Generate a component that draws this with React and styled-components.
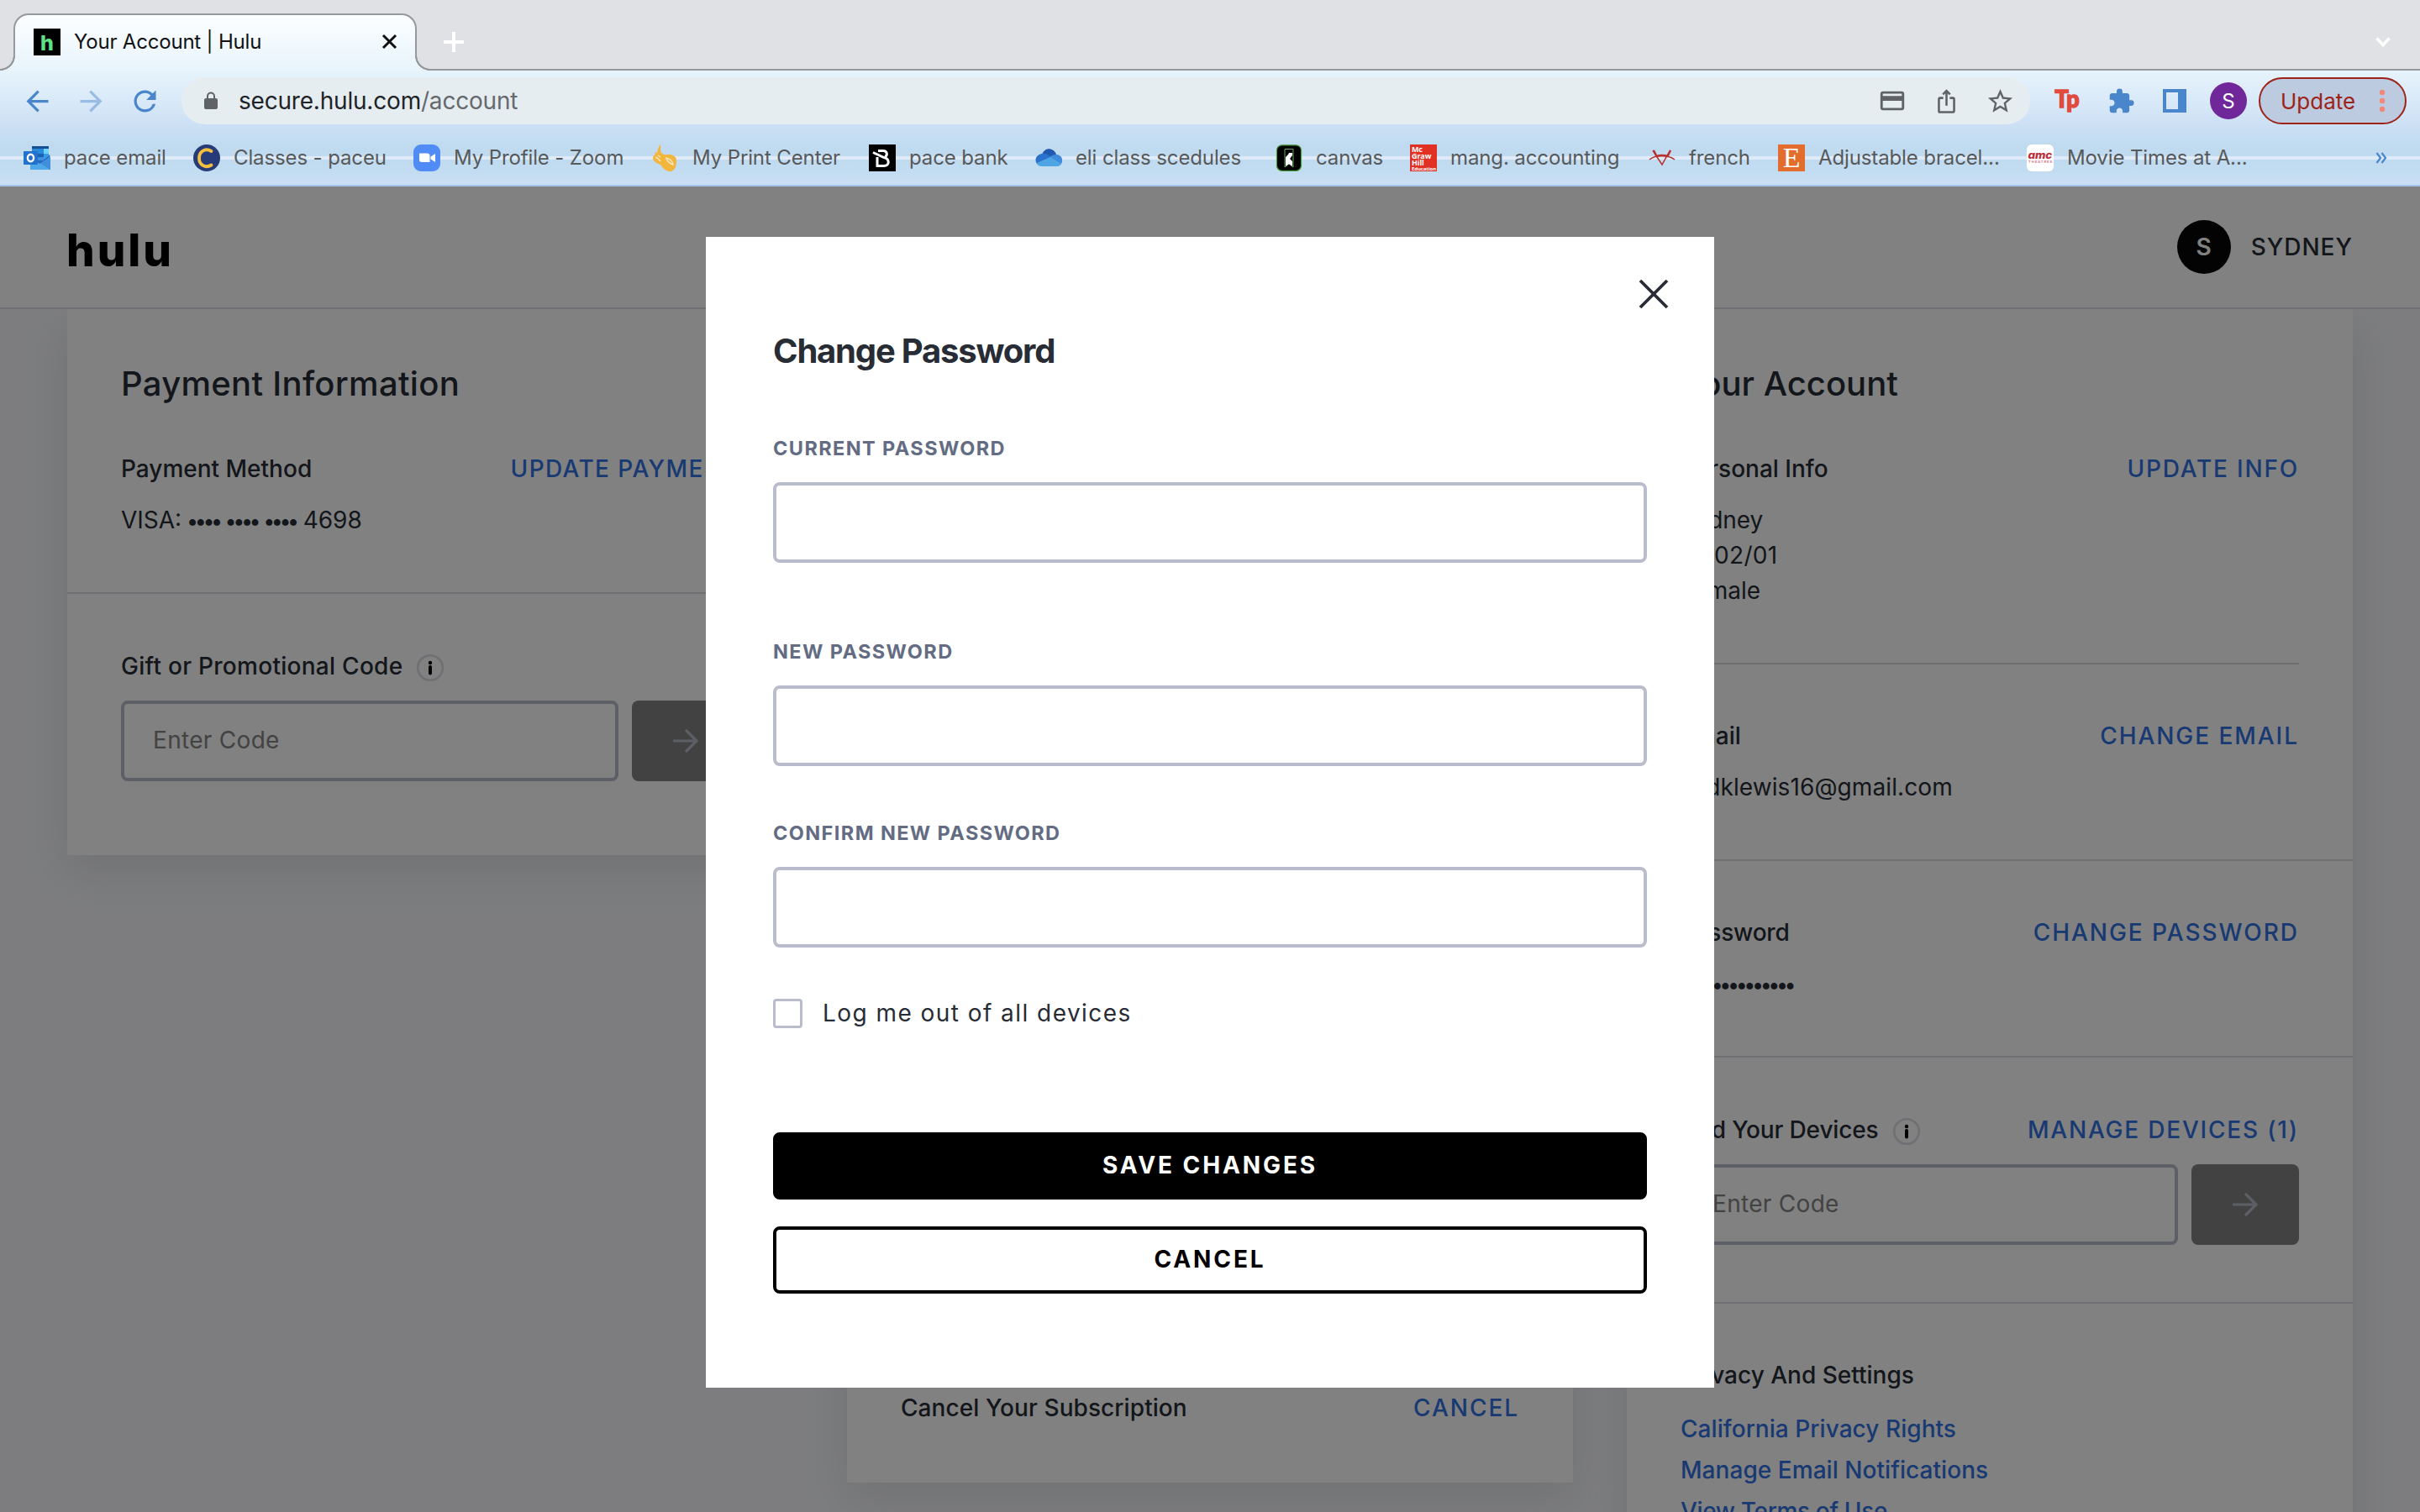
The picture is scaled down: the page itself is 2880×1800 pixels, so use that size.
import React from 'react'
import styled, { createGlobalStyle } from 'styled-components'
import {
  MdArrowBack,
  MdArrowForward,
  MdRefresh,
  MdCreditCard,
  MdIosShare,
  MdStarBorder,
  MdExtension,
} from 'react-icons/md'

const GlobalStyle = createGlobalStyle`
  * {
    box-sizing: border-box;
  }
  body {
    margin: 0;
    overflow: hidden;
    font-family: Inter, 'Liberation Sans', sans-serif;
  }
`

const Window = styled.div`
  width: 2880px;
  height: 1800px;
  display: flex;
  flex-direction: column;
  overflow: hidden;
`

/* ---------- browser ---------- */

const TabStrip = styled.div`
  height: 84px;
  flex: none;
  display: flex;
  align-items: flex-start;
  padding: 16px 35px 0 16px;
  background: #dfe1e5;
  border-bottom: 2px solid #96989c;
`

const Tab = styled.div`
  position: relative;
  width: 480px;
  height: 68px;
  display: flex;
  align-items: center;
  padding: 0 21px 3px 22px;
  border: 2px solid #96989c;
  border-bottom: 0;
  border-radius: 18px 18px 0 0;
  background: linear-gradient(#fcfeff, #e8f4fc);
  &::before,
  &::after {
    content: '';
    position: absolute;
    bottom: 0;
    width: 18px;
    height: 18px;
  }
  &::before {
    left: -18px;
    background: radial-gradient(circle at 0 0, #dfe1e5 15.5px, #96989c 16px 17.7px, #e9f4fc 18.3px);
  }
  &::after {
    right: -18px;
    background: radial-gradient(circle at 100% 0, #dfe1e5 15.5px, #96989c 16px 17.7px, #e9f4fc 18.3px);
  }
`

const TabTitle = styled.span`
  flex: 1;
  margin-left: 16px;
  font-size: 24px;
  letter-spacing: -0.2px;
  color: #111;
`

const StripIcons = styled.div`
  flex: 1;
  height: 67px;
  display: flex;
  align-items: center;
  justify-content: space-between;
  padding-left: 31px;
`

const BrowserBars = styled.div`
  height: 138px;
  flex: none;
  border-bottom: 2px solid #a3c3e8;
  background: linear-gradient(
    #e6f3fc 0,
    #dcebf9 30px,
    #cbdff4 68px,
    #c0dbf0 88px,
    #c0dbf0 102px,
    #dfebf8 102px,
    #dfebf8 106px,
    #c0dbf0 106px,
    #c2dcf1 120px,
    #cbdff4 136px
  );
`

const Toolbar = styled.div`
  height: 72px;
  display: flex;
  align-items: center;
  padding: 0 16px 0 24px;
`

const IconGroup = styled.div`
  display: flex;
  align-items: center;
  gap: 24px;
  color: ${(p) => p.$color};
`

const IconBox = styled.span`
  width: 40px;
  height: 40px;
  display: flex;
  align-items: center;
  justify-content: center;
  opacity: ${(p) => (p.$dim ? 0.45 : 1)};
`

const Omnibox = styled.div`
  width: 2200px;
  height: 56px;
  margin: 0 24px;
  padding: 0 16px 0 26px;
  display: flex;
  align-items: center;
  border-radius: 28px;
  background: #e6edf1;
`

const Url = styled.span`
  flex: 1;
  margin-left: 24px;
  font-size: 28px;
  letter-spacing: -0.2px;
  color: #202327;
`

const UrlPath = styled.span`
  color: #65696e;
`

const ProfileBadge = styled.span`
  width: 44px;
  height: 44px;
  margin: 0 14px 0 22px;
  display: flex;
  align-items: center;
  justify-content: center;
  border-radius: 50%;
  background: #70279a;
  color: #fff;
  font-size: 24px;
`

const UpdateButton = styled.span`
  width: 176px;
  height: 56px;
  padding: 0 23px 0 24px;
  display: flex;
  align-items: center;
  justify-content: space-between;
  border: 2.5px solid #9c2318;
  border-radius: 28px;
  background: #bccbe0;
  color: #9c2318;
  font-size: 26px;
`

const Bookmarks = styled.div`
  height: 64px;
  display: flex;
  align-items: center;
  padding: 0 39px 0 28px;
`

const Bookmark = styled.div`
  width: ${(p) => p.$width}px;
  flex: none;
  display: flex;
  align-items: center;
  gap: 16px;
  white-space: nowrap;
  color: #57595b;
  font-size: 24px;
  letter-spacing: -0.12px;
  svg {
    flex: none;
  }
  span {
    padding-bottom: 2px;
  }
`

const More = styled.span`
  margin-left: auto;
  display: flex;
`

/* ---------- account page ---------- */

const Page = styled.div`
  position: relative;
  flex: 1;
  min-height: 0;
  display: flex;
  flex-direction: column;
  background: #f7f8fb;
  color: #272c35;
`

const Header = styled.header`
  height: 146px;
  flex: none;
  display: flex;
  align-items: center;
  justify-content: space-between;
  padding: 0 80px 1px 79px;
  border-bottom: 2px solid #dcdde6;
  background: #fff;
`

const Logo = styled.span`
  font-size: 53px;
  line-height: 64px;
  font-weight: 800;
  letter-spacing: 3px;
  color: #000;
  padding-top: 8px;
`

const User = styled.div`
  display: flex;
  align-items: center;
  gap: 24px;
  font-size: 28px;
  font-weight: 500;
  letter-spacing: 1px;
`

const UserInitial = styled.span`
  width: 64px;
  height: 64px;
  display: flex;
  align-items: center;
  justify-content: center;
  border-radius: 50%;
  background: #040605;
  color: #fff;
  font-weight: 600;
  letter-spacing: 0;
`

const Columns = styled.main`
  flex: 1;
  min-height: 0;
  display: grid;
  grid-template-columns: repeat(3, 864px);
  gap: 64px;
  align-items: start;
  padding: 0 80px;
  overflow: hidden;
`

const Card = styled.section`
  min-height: ${(p) => p.$height}px;
  display: flex;
  flex-direction: column;
  justify-content: ${(p) => (p.$end ? 'flex-end' : 'flex-start')};
  background: #fff;
  box-shadow: 0 20px 50px rgba(30, 30, 50, 0.1);
`

const Section = styled.div`
  padding: ${(p) => p.$top || 64}px 64px ${(p) => p.$bottom || 65}px;
  border-bottom: ${(p) => (p.$last ? 0 : 2)}px solid #dcdde3;
`

const InsetRule = styled.hr`
  flex: none;
  width: 736px;
  height: 2px;
  margin: 0 64px;
  border: 0;
  background: #dcdce0;
`

const CardTitle = styled.h2`
  margin: 0 0 52px;
  font-size: 40px;
  line-height: 56px;
  font-weight: 500;
  letter-spacing: ${(p) => p.$ls || 0}px;
`

const Row = styled.div`
  height: 42px;
  display: flex;
  justify-content: space-between;
  font-size: 28px;
  line-height: 42px;
  font-weight: 500;
  white-space: nowrap;
`

const RowLabel = styled.span`
  display: flex;
  align-items: center;
  letter-spacing: ${(p) => p.$ls || 0}px;
  svg {
    margin: 4px 0 0 16px;
  }
`

const RowLink = styled.a`
  color: #3271e3;
  letter-spacing: ${(p) => p.$ls || 1.95}px;
`

const Values = styled.div`
  margin-top: 19px;
  font-size: 28px;
  line-height: 42px;
`

const Value = styled.div`
  letter-spacing: ${(p) => p.$ls || 0}px;
`

const Dots = styled.span`
  margin: 0 1px 0 -2px;
  font-size: 25px;
  line-height: 1;
  letter-spacing: -4.4px;
`

const CodeForm = styled.div`
  margin-top: 20px;
  display: flex;
  gap: 16px;
`

const CodeInput = styled.div`
  width: 592px;
  height: 96px;
  padding: 0 34px;
  border: 4px solid #b9bdcb;
  border-radius: 8px;
  font-size: 28px;
  line-height: 87px;
  letter-spacing: 0.3px;
  color: #848484;
`

const CodeSubmit = styled.div`
  width: 128px;
  height: 96px;
  display: flex;
  align-items: center;
  justify-content: center;
  border-radius: 8px;
  background: #828282;
`

const Links = styled.div`
  margin-top: 19px;
  display: flex;
  flex-direction: column;
  color: #3271e3;
  font-size: 28px;
  line-height: 49px;
  font-weight: 500;
`

const Link = styled.a`
  letter-spacing: ${(p) => p.$ls || 0}px;
`

/* ---------- dialog ---------- */

const Overlay = styled.div`
  position: absolute;
  inset: 0;
  display: flex;
  justify-content: center;
  align-items: flex-start;
  padding-top: 60px;
  background: rgba(0, 0, 0, 0.495);
`

const Dialog = styled.div`
  width: 1200px;
  height: 1370px;
  padding: 48px 80px 0;
  display: flex;
  flex-direction: column;
  background: #fff;
`

const CloseRow = styled.div`
  height: 40px;
  display: flex;
  align-items: center;
  justify-content: flex-end;
  margin-right: -26px;
`

const DialogTitle = styled.h1`
  margin: 20px 0 72px;
  font-size: 40px;
  line-height: 56px;
  font-weight: 700;
  letter-spacing: -1.2px;
`

const Field = styled.label`
  display: block;
  height: 152px;
  margin-bottom: ${(p) => p.$after}px;
`

const FieldLabel = styled.span`
  display: block;
  margin-bottom: 24px;
  font-size: 23.5px;
  line-height: 32px;
  font-weight: 700;
  letter-spacing: 1.4px;
  color: #636c83;
`

const FieldBox = styled.span`
  display: block;
  height: 96px;
  border: 4px solid #b9bdcb;
  border-radius: 8px;
`

const CheckRow = styled.div`
  height: 36px;
  display: flex;
  align-items: center;
  gap: 24px;
  margin: 34px 0 124px;
  font-size: 28px;
  letter-spacing: 1.45px;
`

const Checkbox = styled.span`
  width: 35px;
  height: 35px;
  border: 3px solid #b9bdcb;
  border-radius: 4px;
`

const Button = styled.div`
  height: 80px;
  margin-bottom: 32px;
  display: flex;
  align-items: center;
  justify-content: center;
  padding-bottom: 2px;
  border: 4px solid #000;
  border-radius: 8px;
  background: ${(p) => (p.$primary ? '#000' : '#fff')};
  color: ${(p) => (p.$primary ? '#fff' : '#000')};
  font-size: 28px;
  font-weight: 700;
  letter-spacing: 2.9px;
`

/* ---------- icons ---------- */

const svgProps = { width: 32, height: 32, viewBox: '0 0 32 32' }

const HuluIcon = () => (
  <svg {...svgProps}>
    <rect width="32" height="32" fill="#000" />
    <text x="16" y="26" textAnchor="middle" fontFamily="Inter" fontWeight="800" fontSize="25" fill="#5ddf88">h</text>
  </svg>
)

const OutlookIcon = () => (
  <svg {...svgProps}>
    <path d="M10 2h20v14H10z" fill="#2a8ada" />
    <path d="M10 2h20v3H10z" fill="#174f95" />
    <path d="M17 11h7v8h-7z" fill="#1863b4" />
    <path d="M8 15l24 0v15H8z" fill="#3f8fdd" />
    <path d="M8 15l24 15H8z" fill="#4fa9e8" />
    <path d="M17 21l2 2 13-9-2-2-6 0v7h-7z" fill="#2468c0" />
    <path d="M24 5h6v9l-6 4z" fill="#3a9de3" />
    <path d="M24 5h6v6h-6z" fill="#6ed3f8" />
    <rect y="8" width="17" height="16" rx="1" fill="#2172cc" />
    <ellipse cx="8.500" cy="16" rx="3.600" ry="4.200" fill="none" stroke="#fff" strokeWidth="2.400" />
  </svg>
)

const PaceIcon = () => (
  <svg {...svgProps}>
    <circle cx="16" cy="16" r="16" fill="#263b77" />
    <path d="M21.500 8C14 3.500 7 8.500 7 16.200S14 29 21.500 24.500" fill="none" stroke="#f3bf3e" strokeWidth="3.800" strokeLinecap="round" />
  </svg>
)

const ZoomIcon = () => (
  <svg {...svgProps}>
    <rect width="32" height="32" rx="9" fill="#508bf6" />
    <path d="M7 10.500h9.500a3 3 0 0 1 3 3v7.500H10a3 3 0 0 1-3-3z" fill="#fff" />
    <path d="M20.500 14.500l5.500-3.500v10l-5.500-3.500z" fill="#fff" />
  </svg>
)

const PrintIcon = () => (
  <svg {...svgProps}>
    <path
      d="M10 0c1 4-1 6 1 10 3 3 6 2 11 2 4 1 7 3 7 7 0 7-2 13-8 13-5 0-8-4-11-8-5-2-9-4-9-8 0-2 1-3 3-4L3 9l3 1C7 7 7 3 10 0z"
      fill="#f3b63c"
    />
    <path d="M4 15c3 1 4 2 6 5M7 13l3 2M17 16c4 1 7 3 8 8-3-1-7-3-8-8z" fill="none" stroke="#f4e6c2" strokeWidth="1.500" />
  </svg>
)

const BankIcon = () => (
  <svg {...svgProps}>
    <rect width="32" height="32" fill="#000" />
    <path
      d="M5 9.500l13 6c7 1.500 7 10 0 10h-8V15M11 7.500h6c5 0 5.500 5 2.500 7"
      fill="none"
      stroke="#fff"
      strokeWidth="3"
    />
  </svg>
)

const CloudIcon = () => (
  <svg {...svgProps}>
    <path d="M8 13C10 3 22 3 25 12l-7 8z" fill="#2259b0" />
    <path d="M8 11c5-1 8 2 12 5L3 24C-2 19 1 12 8 11z" fill="#2b72cf" />
    <path d="M25 12c6 0 9 6 6 11l-3 2-12-9c3-3 6-4 9-4z" fill="#3d8cdc" />
    <path d="M2 22l16-7 13 8c-1 2-3 3-5 3H8c-3 0-5-1-6-4z" fill="#4fa4e4" />
  </svg>
)

const CanvasIcon = () => (
  <svg {...svgProps}>
    <rect x="1.500" y="0.800" width="29" height="30.500" rx="6" fill="#000" stroke="#4a9a3c" strokeWidth="1.200" />
    <path d="M11 5.500h10V27l-5-4-5 4z" fill="none" stroke="#6fa862" />
    <path d="M12 15l3-3 1-2 4 0v3l-3 4 3 3v6l-4-3-4 3z" fill="#fff" />
  </svg>
)

const McGrawIcon = () => (
  <svg {...svgProps} fontFamily="Open Sans" fontWeight="700" fill="#fff">
    <rect width="32" height="32" fill="#e13024" />
    <text x="2" y="9" fontSize="9">Mc</text>
    <text x="2" y="17" fontSize="9">Graw</text>
    <text x="2" y="25" fontSize="9">Hill</text>
    <text x="2" y="31" fontSize="5.500" textLength="29" lengthAdjust="spacingAndGlyphs">Education</text>
  </svg>
)

const FrenchIcon = () => (
  <svg {...svgProps}>
    <path d="M1 18c7-6 22-6 30 0M5 7l5 8 6 9 5-9 5-8" fill="none" stroke="#b8312f" strokeWidth="1.500" />
    <path d="M6 7l4 8M26 7l-4 8M9 14q7-2 14 0" fill="none" stroke="#b8312f" strokeWidth="2.400" />
  </svg>
)

const EtsyIcon = () => (
  <svg {...svgProps}>
    <rect width="32" height="32" fill="#e26d2c" />
    <text x="16" y="27" textAnchor="middle" fontFamily="Liberation Serif" fontSize="34" fill="#fff">E</text>
  </svg>
)

const AmcIcon = () => (
  <svg {...svgProps}>
    <rect width="32" height="32" rx="6" fill="#fff" />
    <text x="1.500" y="17" fontFamily="Inter" fontWeight="800" fontStyle="italic" fontSize="12" textLength="28.500" lengthAdjust="spacingAndGlyphs" fill="#bf2b36">amc</text>
    <text x="2" y="22" fontFamily="Inter" fontWeight="600" fontSize="4" textLength="28" fill="#cf6a70">THEATRES</text>
  </svg>
)

const LockIcon = () => (
  <svg width="18" height="22" viewBox="0 0 18 22">
    <rect x="1" y="8" width="16" height="13" rx="2" fill="#5f6368" />
    <path d="M5 8V5.500a4 4 0 0 1 8 0V8" fill="none" stroke="#5f6368" strokeWidth="2" />
  </svg>
)

const TpIcon = () => (
  <svg width="40" height="40" viewBox="0 0 40 40">
    <text x="5.500" y="27.500" fontFamily="Lato" fontWeight="900" fontSize="28" textLength="29" lengthAdjust="spacingAndGlyphs" fill="#e04a3f" stroke="#e04a3f" strokeWidth="1.500">Tp</text>
  </svg>
)

const SidePanelIcon = () => (
  <svg width="28" height="28" viewBox="0 0 28 28">
    <path d="M0 0h28v28H0zM4 4v20h14V4z" fill="#4a86cb" fillRule="evenodd" />
  </svg>
)

const DotsIcon = () => (
  <svg width="8" height="28" viewBox="0 0 8 28" fill="#f0897c">
    <circle cx="4" cy="4" r="3.200" />
    <circle cx="4" cy="14" r="3.200" />
    <circle cx="4" cy="24" r="3.200" />
  </svg>
)

const Cross = ({ size, width, color }) => (
  <svg width={size} height={size} viewBox={`0 0 ${size} ${size}`}>
    <path d={`M2 2L${size - 2} ${size - 2}M${size - 2} 2L2 ${size - 2}`} stroke={color} strokeWidth={width} />
  </svg>
)

const InfoIcon = () => (
  <svg width="34" height="34" viewBox="0 0 34 34">
    <circle cx="17" cy="17" r="14.800" fill="none" stroke="#dcdde6" strokeWidth="2.600" />
    <circle cx="17" cy="11" r="2.200" fill="#000" />
    <path d="M17 16v7.500" stroke="#000" strokeWidth="4" strokeLinecap="round" />
  </svg>
)

const ArrowIcon = () => (
  <svg width="32" height="32" viewBox="0 0 32 32" fill="none" stroke="#b9bdcb" strokeWidth="3.200">
    <path d="M1 16h28M16 3l13 13-13 13" />
  </svg>
)

/* widths are the distance to the next bookmark */
const bookmarks = [
  { icon: <OutlookIcon />, title: 'pace email', width: 202 },
  { icon: <PaceIcon />, title: 'Classes - paceu', width: 262 },
  { icon: <ZoomIcon />, title: 'My Profile - Zoom', width: 284 },
  { icon: <PrintIcon />, title: 'My Print Center', width: 258 },
  { icon: <BankIcon />, title: 'pace bank', width: 198 },
  { icon: <CloudIcon />, title: 'eli class scedules', width: 286 },
  { icon: <CanvasIcon />, title: 'canvas', width: 160 },
  { icon: <McGrawIcon />, title: 'mang. accounting', width: 284 },
  { icon: <FrenchIcon />, title: 'french', width: 154 },
  { icon: <EtsyIcon />, title: 'Adjustable bracel...', width: 296 },
  { icon: <AmcIcon />, title: 'Movie Times at A...', width: 280 },
]

const Browser = () => (
  <>
    <TabStrip>
      <Tab>
        <HuluIcon />
        <TabTitle>Your Account | Hulu</TabTitle>
        <Cross size={19} width={3} color="#111" />
      </Tab>
      <StripIcons>
        <svg width="26" height="26" viewBox="0 0 26 26">
          <path d="M13 1v24M1 13h24" stroke="#fff" strokeWidth="4" />
        </svg>
        <svg width="18" height="12" viewBox="0 0 18 12">
          <path d="M1.500 1.500L9 9.500l7.500-8" fill="none" stroke="#fff" strokeWidth="3.500" />
        </svg>
      </StripIcons>
    </TabStrip>
    <BrowserBars>
      <Toolbar>
        <IconGroup $color="#4a86cb">
          <IconBox><MdArrowBack size={39} /></IconBox>
          <IconBox $dim><MdArrowForward size={39} /></IconBox>
          <IconBox><MdRefresh size={39} /></IconBox>
        </IconGroup>
        <Omnibox>
          <LockIcon />
          <Url>
            secure.hulu.com<UrlPath>/account</UrlPath>
          </Url>
          <IconGroup $color="#5f6368">
            <IconBox><MdCreditCard size={34} /></IconBox>
            <IconBox><MdIosShare size={31} /></IconBox>
            <IconBox><MdStarBorder size={35} /></IconBox>
          </IconGroup>
        </Omnibox>
        <IconGroup $color="#4a86cb">
          <IconBox><TpIcon /></IconBox>
          <IconBox><MdExtension size={33} /></IconBox>
          <IconBox><SidePanelIcon /></IconBox>
        </IconGroup>
        <ProfileBadge>S</ProfileBadge>
        <UpdateButton>
          Update
          <DotsIcon />
        </UpdateButton>
      </Toolbar>
      <Bookmarks>
        {bookmarks.map(({ icon, title, width }) => (
          <Bookmark key={title} $width={width}>
            {icon}
            <span>{title}</span>
          </Bookmark>
        ))}
        <More>
          <svg width="14" height="14" viewBox="0 0 14 14">
            <path d="M1.500 1l4.500 6-4.500 6M7.500 1l4.500 6-4.500 6" fill="none" stroke="#4a86cb" strokeWidth="2.200" />
          </svg>
        </More>
      </Bookmarks>
    </BrowserBars>
  </>
)

const EnterCode = () => (
  <CodeForm>
    <CodeInput>Enter Code</CodeInput>
    <CodeSubmit>
      <ArrowIcon />
    </CodeSubmit>
  </CodeForm>
)

const PaymentCard = () => (
  <Card $height={650}>
    <Section $top={61}>
      <CardTitle $ls={0.3}>Payment Information</CardTitle>
      <Row>
        <RowLabel>Payment Method</RowLabel>
        <RowLink $ls={1.4}>UPDATE PAYMENT</RowLink>
      </Row>
      <Values>
        <Value>
          VISA: <Dots>••••</Dots> <Dots>••••</Dots> <Dots>••••</Dots> 4698
        </Value>
      </Values>
    </Section>
    <Section $top={65} $last>
      <Row>
        <RowLabel $ls={0.28}>
          Gift or Promotional Code
          <InfoIcon />
        </RowLabel>
      </Row>
      <EnterCode />
    </Section>
  </Card>
)

const SubscriptionCard = () => (
  <Card $height={1397} $end>
    <Section $last $bottom={68}>
      <Row>
        <RowLabel $ls={0.08}>Cancel Your Subscription</RowLabel>
        <RowLink>CANCEL</RowLink>
      </Row>
    </Section>
  </Card>
)

const AccountCard = () => (
  <Card $height={1500}>
    <Section $top={61} $last>
      <CardTitle>Your Account</CardTitle>
      <Row>
        <RowLabel>Personal Info</RowLabel>
        <RowLink $ls={1.8}>UPDATE INFO</RowLink>
      </Row>
      <Values>
        <Value>Sydney</Value>
        <Value $ls={0.3}>10/02/01</Value>
        <Value>Female</Value>
      </Values>
    </Section>
    <InsetRule />
    <Section>
      <Row>
        <RowLabel>Email</RowLabel>
        <RowLink>CHANGE EMAIL</RowLink>
      </Row>
      <Values>
        <Value $ls={0.1}>sydklewis16@gmail.com</Value>
      </Values>
    </Section>
    <Section>
      <Row>
        <RowLabel $ls={-0.2}>Password</RowLabel>
        <RowLink>CHANGE PASSWORD</RowLink>
      </Row>
      <Values>
        <Value>
          <Dots>••••••••••••••</Dots>
        </Value>
      </Values>
    </Section>
    <Section $top={65} $bottom={68}>
      <Row>
        <RowLabel $ls={-0.14}>
          Add Your Devices
          <InfoIcon />
        </RowLabel>
        <RowLink $ls={1.8}>MANAGE DEVICES (1)</RowLink>
      </Row>
      <EnterCode />
    </Section>
    <Section $last>
      <Row>
        <RowLabel>Privacy And Settings</RowLabel>
      </Row>
      <Links>
        <Link $ls={0.05}>California Privacy Rights</Link>
        <Link $ls={0.05}>Manage Email Notifications</Link>
        <Link $ls={-0.35}>View Terms of Use</Link>
      </Links>
    </Section>
  </Card>
)

const ChangePasswordDialog = () => (
  <Overlay>
    <Dialog>
      <CloseRow>
        <Cross size={36} width={3.8} color="#272c35" />
      </CloseRow>
      <DialogTitle>Change Password</DialogTitle>
      <Field $after={90}>
        <FieldLabel>CURRENT PASSWORD</FieldLabel>
        <FieldBox />
      </Field>
      <Field $after={64}>
        <FieldLabel>NEW PASSWORD</FieldLabel>
        <FieldBox />
      </Field>
      <Field $after={26}>
        <FieldLabel>CONFIRM NEW PASSWORD</FieldLabel>
        <FieldBox />
      </Field>
      <CheckRow>
        <Checkbox />
        <span>Log me out of all devices</span>
      </CheckRow>
      <Button $primary>SAVE CHANGES</Button>
      <Button>CANCEL</Button>
    </Dialog>
  </Overlay>
)

const App = () => (
  <Window>
    <GlobalStyle />
    <Browser />
    <Page>
      <Header>
        <Logo>hulu</Logo>
        <User>
          <UserInitial>S</UserInitial>
          <span>SYDNEY</span>
        </User>
      </Header>
      <Columns>
        <PaymentCard />
        <SubscriptionCard />
        <AccountCard />
      </Columns>
      <ChangePasswordDialog />
    </Page>
  </Window>
)

export default App
